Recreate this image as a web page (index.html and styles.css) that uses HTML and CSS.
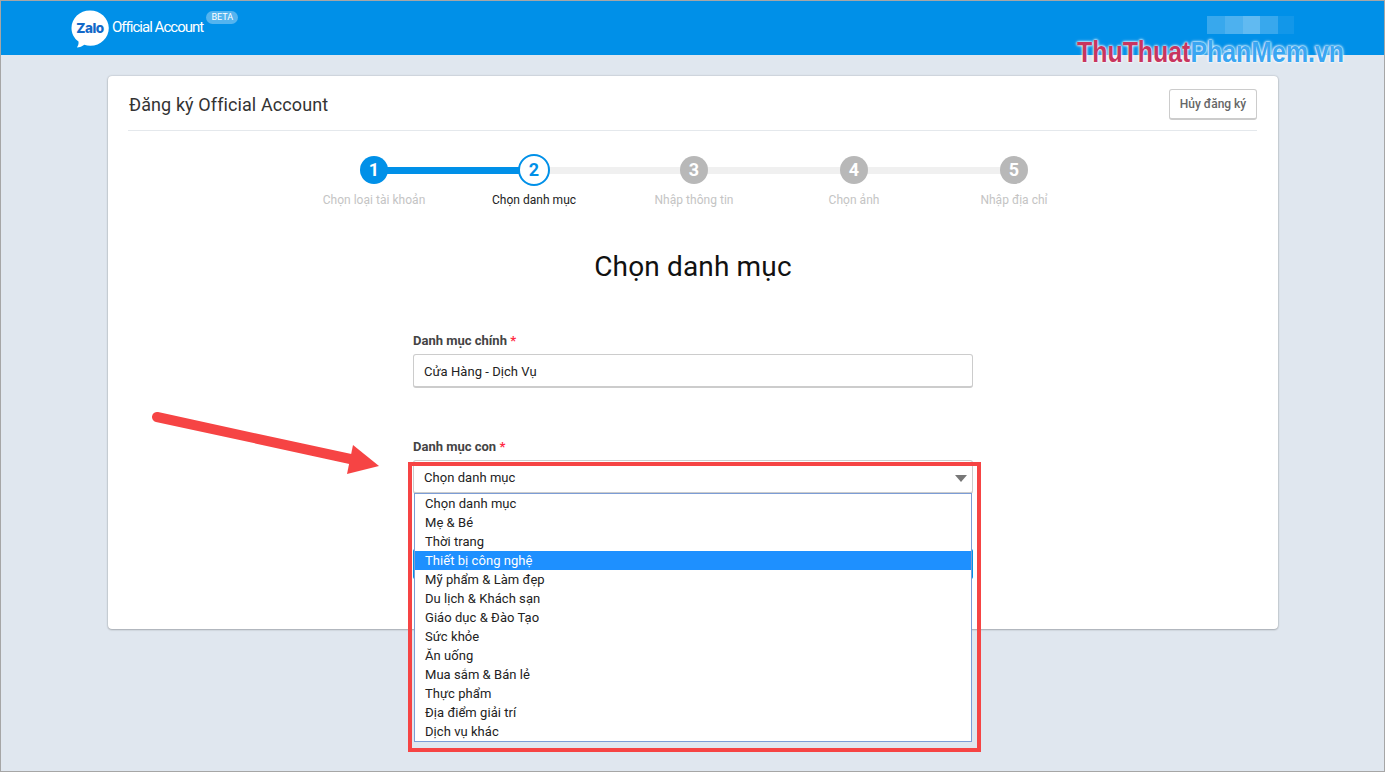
FILE: index.html
```html
<!DOCTYPE html>
<html lang="vi">
<head>
<meta charset="utf-8">
<title>Zalo Official Account</title>
<link rel="stylesheet" href="styles.css">
</head>
<body>
<div class="frame">
  <header class="topbar">
    <div class="brand">
      <svg class="logo" width="40" height="40" viewBox="0 0 40 40">
        <path d="M20 1.5C9.7 1.5 1.5 9.3 1.5 19c0 5.6 2.7 10.400 7 13.600.4 2.600-.6 4.400-1.600 6 2.800-.2 5.400-1.200 7.400-2.800 1.900.6 3.900 1 6 1 10.300 0 18.500-8 18.500-17.800S30.300 1.500 20 1.500z" fill="#fff"/>
        <text class="logo-text" x="20" y="23.500" text-anchor="middle">Zalo</text>
      </svg>
      <span class="brand-name">Official Account</span>
      <span class="beta">BETA</span>
    </div>
    <div class="user-blur">
      <i class="b1"></i><i class="b2"></i><i class="b3"></i><i class="b4"></i><i class="b5"></i>
    </div>
  </header>

  <main class="page">
    <section class="card">
      <div class="card-head">
        <h2 class="card-title">Đăng ký Official Account</h2>
        <button class="btn-cancel" type="button">Hủy đăng ký</button>
      </div>

      <ol class="steps">
        <li class="step done"><span class="dot">1</span><span class="step-label">Chọn loại tài khoản</span></li>
        <li class="step current"><span class="dot">2</span><span class="step-label">Chọn danh mục</span></li>
        <li class="step"><span class="dot">3</span><span class="step-label">Nhập thông tin</span></li>
        <li class="step"><span class="dot">4</span><span class="step-label">Chọn ảnh</span></li>
        <li class="step"><span class="dot">5</span><span class="step-label">Nhập địa chỉ</span></li>
      </ol>

      <h1 class="heading">Chọn danh mục</h1>

      <form class="form">
        <label class="field-label">Danh mục chính <em>*</em></label>
        <div class="input">Cửa Hàng - Dịch Vụ</div>

        <label class="field-label second">Danh mục con <em>*</em></label>
        <div class="select">
          Chọn danh mục
          <span class="caret"></span>
          <ul class="dropdown">
            <li>Chọn danh mục</li>
            <li>Mẹ &amp; Bé</li>
            <li>Thời trang</li>
            <li class="active">Thiết bị công nghệ</li>
            <li>Mỹ phẩm &amp; Làm đẹp</li>
            <li>Du lịch &amp; Khách sạn</li>
            <li>Giáo dục &amp; Đào Tạo</li>
            <li>Sức khỏe</li>
            <li>Ăn uống</li>
            <li>Mua sắm &amp; Bán lẻ</li>
            <li>Thực phẩm</li>
            <li>Địa điểm giải trí</li>
            <li>Dịch vụ khác</li>
          </ul>
        </div>
        <div class="submit"></div>
      </form>
    </section>
  </main>

  <div class="watermark"><span class="wm-red">ThuThuat</span><span class="wm-blue">PhanMem.vn</span></div>

  <svg class="arrow" width="240" height="70" viewBox="0 0 240 70">
    <line x1="7" y1="7" x2="205" y2="50" stroke="#f64444" stroke-width="10" stroke-linecap="round"/>
    <polygon points="203,35 229,56 197,64" fill="#f64444"/>
  </svg>
  <div class="highlight-box"></div>
</div>
</body>
</html>
```
FILE: styles.css
```css
* { box-sizing: border-box; }
html, body { margin: 0; padding: 0; }
body { font-family: Roboto, "Noto Sans", sans-serif; color: #333; }

.frame {
  position: relative;
  width: 1385px;
  height: 772px;
  overflow: hidden;
  background: #e0e7ef;
  border: 1px solid #a6a6a6;
}

.topbar {
  display: flex;
  align-items: flex-start;
  justify-content: space-between;
  height: 54px;
  padding: 0 90px 0 69px;
  background: #0090e8;
}
.brand { display: flex; align-items: flex-start; color: #fff; }
.logo { margin-top: 8px; display: block; }
.logo-text { font-family: Inter, Roboto, sans-serif; font-weight: 800; font-size: 13.5px; letter-spacing: -.5px; fill: #1268c8; }
.brand-name { margin: 16px 0 0 2px; font-size: 15px; font-weight: 400; line-height: 20px; letter-spacing: -.98px; }
.beta {
  margin: 10px 0 0 3px;
  width: 32px;
  height: 13px;
  border-radius: 7px;
  background: rgba(255,255,255,.33);
  font-size: 9px;
  line-height: 13px;
  text-align: center;
}
.user-blur { display: flex; margin-top: 15px; height: 18px; }
.user-blur i { display: block; height: 100%; background: #fff; }
.user-blur .b1 { width: 18px; opacity: .22; }
.user-blur .b2 { width: 18px; opacity: .3; }
.user-blur .b3 { width: 17px; opacity: .38; }
.user-blur .b4 { width: 18px; opacity: .22; }
.user-blur .b5 { width: 16px; opacity: .07; }

.page { padding: 21px 107px 0; }
.card {
  width: 1170px;
  height: 553px;
  padding: 0 20px;
  background: #fff;
  border-radius: 4px;
  box-shadow: 0 0 2px rgba(0,0,0,.25), 0 1px 2px rgba(0,0,0,.2);
}
.card-head {
  display: flex;
  align-items: center;
  justify-content: space-between;
  height: 55px;
  margin-right: 1px;
  padding-top: 3px;
  border-bottom: 1px solid #e4e8ec;
}
.card-title { margin: 0 0 0 1px; font-size: 18px; font-weight: 400; letter-spacing: .1px; color: #333; }
.btn-cancel {
  width: 88px;
  height: 31px;
  padding: 0;
  border: 1px solid #ccc;
  border-bottom-width: 2px;
  border-radius: 3px;
  background: #fff;
  font: 500 12px Roboto, sans-serif;
  color: #666;
}

.steps {
  display: flex;
  justify-content: center;
  margin: 23px 0 0;
  padding: 0 0 0 2px;
  list-style: none;
}
.step {
  position: relative;
  display: flex;
  flex-direction: column;
  align-items: center;
  width: 160px;
}
.step + .step::before {
  content: "";
  position: absolute;
  top: 13px;
  left: -80px;
  width: 160px;
  height: 7px;
  background: #f0f0f0;
}
.step.current::before { background: #0090e8 !important; }
.dot {
  position: relative;
  z-index: 1;
  width: 28px;
  height: 28px;
  margin: 2px 0;
  border-radius: 50%;
  background: #b8b8b8;
  color: #fff;
  font-size: 18px;
  font-weight: 700;
  line-height: 28px;
  text-align: center;
}
.done .dot { background: #0090e8; }
.current .dot {
  width: 32px;
  height: 32px;
  margin: 0;
  border: 2px solid #0090e8;
  background: #fff;
  color: #0090e8;
}
.step-label {
  margin-top: 5px;
  font-size: 12px;
  letter-spacing: .03px;
  line-height: 18px;
  color: #c4c4c4;
}
.current .step-label { color: #222; }

.heading {
  margin: 38px 0 0;
  font-size: 28px;
  font-weight: 400;
  letter-spacing: .15px;
  line-height: 40px;
  text-align: center;
  color: #111;
}

.form { width: 560px; margin: 44px auto 0; }
.field-label {
  display: block;
  margin-bottom: 4px;
  font-size: 13px;
  font-weight: 700;
  line-height: 19px;
  color: #444;
}
.field-label em { font-style: normal; color: #ff2a44; }
.field-label.second { margin-top: 49px; }
.input, .select {
  position: relative;
  height: 34px;
  padding-left: 10px;
  border: 1px solid #ccc;
  border-bottom-width: 2px;
  border-radius: 3px;
  background: #fff;
  font-size: 13px;
  letter-spacing: .05px;
  line-height: 33px;
  color: #222;
}
.caret {
  position: absolute;
  top: 14px;
  right: 5px;
  border-left: 6px solid transparent;
  border-right: 6px solid transparent;
  border-top: 7px solid #777;
}
.dropdown {
  position: absolute;
  z-index: 2;
  top: 32px;
  left: 0;
  width: 558px;
  height: 249px;
  margin: 0;
  padding: 0;
  list-style: none;
  border: 1px solid #7c9dd6;
  background: #fff;
}
.dropdown li {
  height: 19px;
  padding-left: 10px;
  font-size: 13px;
  line-height: 19px;
  color: #222;
}
.dropdown li.active { background: #1e90ff; color: #fff; }
.submit { height: 30px; margin-top: 55px; background: #0090e8; border-radius: 2px; }

.watermark {
  position: absolute;
  top: 32px;
  left: 1076px;
  font-family: "Liberation Sans", sans-serif;
  font-size: 30px;
  font-weight: 700;
  line-height: 38px;
  white-space: nowrap;
  transform: scaleX(.83);
  transform-origin: left center;
  text-shadow: 0 0 2px #fff, 0 0 3px rgba(255,255,255,.9), 0 0 4px rgba(255,255,255,.7);
}
.wm-red { color: #c8355f; }
.wm-blue { color: #3aa6f2; }

.arrow { position: absolute; top: 409px; left: 149px; }
.highlight-box {
  position: absolute;
  z-index: 3;
  top: 461px;
  left: 407px;
  width: 573px;
  height: 290px;
  border: 4px solid #f64444;
}
```
